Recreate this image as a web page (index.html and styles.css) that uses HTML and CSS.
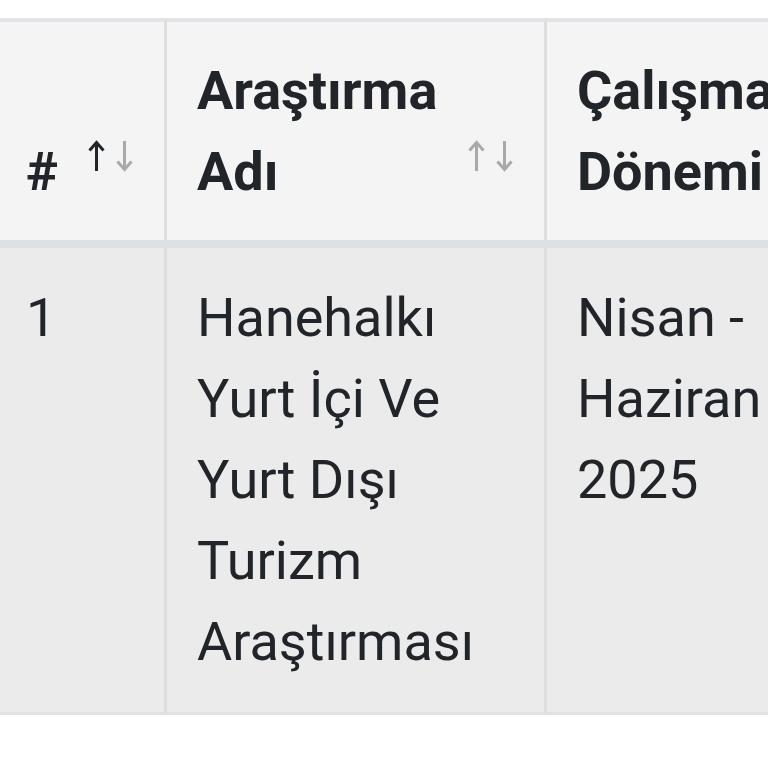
FILE: index.html
```html
<!DOCTYPE html>
<html lang="tr">
<head>
<meta charset="utf-8">
<title>Araştırmalar</title>
<link rel="stylesheet" href="styles.css">
</head>
<body>
<div class="wrap">
  <table class="grid">
    <thead>
      <tr>
        <th class="c-no">#
          <span class="order">
            <svg class="arr on" viewBox="0 0 17 32" width="17" height="32"><path d="M8.5 31V3M1.5 10.5L8.5 2.5L15.5 10.5"/></svg>
            <svg class="arr" viewBox="0 0 17 32" width="17" height="32"><path d="M8.5 1V29M1.5 21.5L8.5 29.5L15.5 21.5"/></svg>
          </span>
        </th>
        <th class="c-name">Araştırma Adı
          <span class="order">
            <svg class="arr" viewBox="0 0 17 32" width="17" height="32"><path d="M8.5 31V3M1.5 10.5L8.5 2.5L15.5 10.5"/></svg>
            <svg class="arr" viewBox="0 0 17 32" width="17" height="32"><path d="M8.5 1V29M1.5 21.5L8.5 29.5L15.5 21.5"/></svg>
          </span>
        </th>
        <th class="c-period">Çalışma Dönemi</th>
      </tr>
    </thead>
    <tbody>
      <tr>
        <td class="c-no">1</td>
        <td class="c-name">Hanehalkı Yurt İçi Ve Yurt Dışı Turizm Araştırması</td>
        <td class="c-period">Nisan - Haziran 2025</td>
      </tr>
    </tbody>
  </table>
</div>
</body>
</html>
```
FILE: styles.css
```css
html, body {
  margin: 0;
  padding: 0;
  background: #ffffff;
  overflow: hidden;
}

.wrap {
  padding-top: 18px;
  width: 768px;
  height: 768px;
  overflow: hidden;
}

.grid {
  margin-left: -4px;
  border-collapse: separate;
  border-spacing: 0;
  table-layout: fixed;
  width: 871px;
  font-family: Roboto, "Liberation Sans", sans-serif;
  font-size: 54px;
  line-height: 1.5;
  color: #212529;
}

.grid th,
.grid td {
  box-sizing: border-box;
  text-align: left;
  padding: 28px 30px;
}

.grid th {
  position: relative;
  vertical-align: bottom;
  font-weight: 700;
  background: #f4f4f5;
  border-top: 4px solid #e2e4e7;
  border-bottom: 8px solid #dde1e6;
}

.grid td {
  vertical-align: top;
  font-weight: 400;
  background: #ebebeb;
  padding-top: 29px;
  padding-bottom: 30px;
  border-bottom: 3px solid #e1e1e1;
}

.c-no {
  width: 171px;
  border-right: 3px solid #dedede;
}

.c-name {
  width: 380px;
  border-right: 3px solid #dedede;
}

.c-period {
  width: 320px;
}

.order {
  position: absolute;
  right: 31px;
  top: 118px;
  display: flex;
  gap: 11px;
}

.arr {
  display: block;
  fill: none;
  stroke: #a9a9a9;
  stroke-width: 3;
  stroke-linecap: butt;
  stroke-linejoin: miter;
}

.arr.on {
  stroke: #212529;
}
```
